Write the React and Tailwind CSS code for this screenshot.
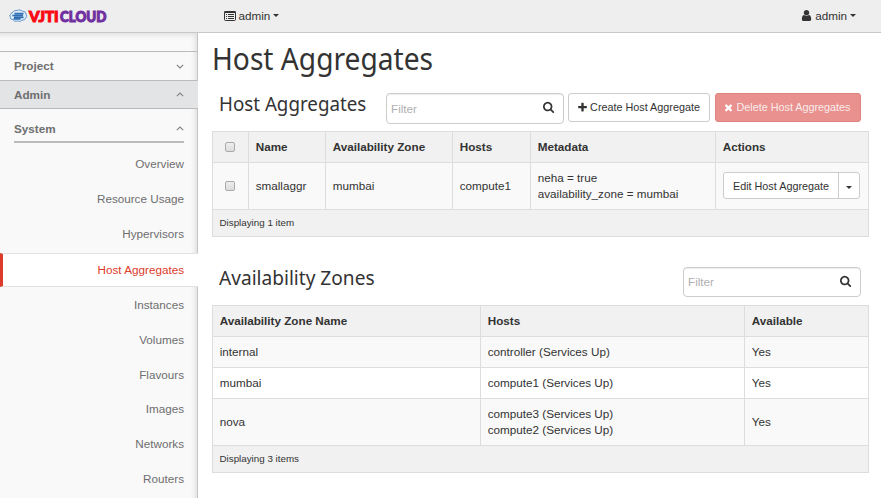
const ICONS = {
  search:
    'M1152 832q0-185-131.5-316.5t-316.5-131.5-316.5 131.5-131.5 316.5 131.5 316.5 316.5 131.5 316.5-131.5 131.5-316.5zm512 832q0 52-38 90t-90 38q-54 0-90-38l-343-342q-179 124-399 124-143 0-273.5-55.5t-225-150-150-225-55.5-273.5 55.5-273.5 150-225 225-150 273.5-55.5 273.5 55.5 225 150 150 225 55.5 273.5q0 220-124 399l343 343q37 37 37 90z',
  plus: 'M1600 736v192q0 40-28 68t-68 28h-416v416q0 40-28 68t-68 28h-192q-40 0-68-28t-28-68v-416h-416q-40 0-68-28t-28-68v-192q0-40 28-68t68-28h416v-416q0-40 28-68t68-28h192q40 0 68 28t28 68v416h416q40 0 68 28t28 68z',
  times:
    'M1490 1322q0 40-28 68l-136 136q-28 28-68 28t-68-28l-294-294-294 294q-28 28-68 28t-68-28l-136-136q-28-28-28-68t28-68l294-294-294-294q-28-28-28-68t28-68l136-136q28-28 68-28t68 28l294 294 294-294q28-28 68-28t68 28l136 136q28 28 28 68t-28 68l-294 294 294 294q28 28 28 68z',
  user: 'M1536 1399q0 109-62.5 187t-150.5 78h-854q-88 0-150.5-78t-62.5-187q0-85 8.5-160.5t31.5-152 58.5-131 94-89 134.5-34.5q131 128 313 128t313-128q76 0 134.5 34.5t94 89 58.5 131 31.5 152 8.5 160.5zm-256-887q0 159-112.5 271.5t-271.5 112.5-271.5-112.5-112.5-271.5 112.5-271.5 271.5-112.5 271.5 112.5 112.5 271.5z',
}

function Icon({ name, className }) {
  return (
    <svg viewBox="0 0 1792 1792" fill="currentColor" className={`shrink-0 ${className}`}>
      <path d={ICONS[name]} />
    </svg>
  )
}

function ListIcon() {
  return (
    <svg viewBox="0 0 12 10" className="h-[10px] w-[12px] shrink-0" fill="none">
      <rect x="0.5" y="0.5" width="11" height="9" rx="1" stroke="#333" />
      <path d="M0.5 1h11" stroke="#333" strokeWidth="2" />
      <path d="M2 3.5h1M4 3.5h6M2 5.5h1M4 5.5h6M2 7.5h1M4 7.5h6" stroke="#333" />
    </svg>
  )
}

function Caret() {
  return (
    <svg viewBox="0 0 6 3" className="h-[3px] w-[6px] shrink-0" fill="#333">
      <path d="M0 0h6L3 3z" />
    </svg>
  )
}

function Chevron({ up }) {
  return (
    <svg viewBox="0 0 8 5" className="h-[5px] w-[8px] shrink-0" fill="none" stroke="#808080" strokeWidth="1.1">
      <path d={up ? 'M0.8 4.2L4 1l3.2 3.2' : 'M0.8 0.8L4 4l3.2-3.2'} />
    </svg>
  )
}

function Logo() {
  return (
    <div className="flex items-center">
      <svg viewBox="0 0 19 14" className="h-[14px] w-[19px]" fill="none" stroke="#5a8fc6">
        <path
          d="M4 3.2Q5 1 8 1.4Q11 0 13.5 2.2Q17 2.2 17 5Q18.8 7.5 16.6 9.2Q16 11.5 12.8 11.3Q11 13.4 8.6 12Q5 13 4 10.7Q1 10.5 1.2 8.2Q0 5.5 2 5Q2 3.6 4 3.2z"
          fill="#dcebf7"
          strokeWidth="0.9"
        />
        <path d="M5.5 4.6h9M3.4 6.5h10.6M5 8.4h9.5M4.5 10h7" stroke="#2f6fb2" strokeWidth="1.6" />
      </svg>
      <span className="ml-[1px] flex w-[80px] whitespace-nowrap font-['Lato',sans-serif] text-[15px] leading-[16px] font-black [-webkit-text-stroke:1.1px_currentColor]">
        <span className="flex w-[31px]">
          <span className="origin-left scale-x-[1] text-[#fa0a14]">VJTI</span>
        </span>
        <span className="w-[48px] origin-left scale-x-[0.89] text-[#7030a0]">CLOUD</span>
      </span>
    </div>
  )
}

function Filter({ className }) {
  return (
    <div
      className={`flex w-[178px] items-center justify-between rounded-[4px] border border-[#ccc] bg-white pr-[8px] pl-[4px] shadow-[inset_0_1px_1px_rgba(0,0,0,0.075)] ${className}`}
    >
      <span className="text-[11.7px] text-[#b0b0b0]">Filter</span>
      <Icon name="search" className="mb-[3px] h-[12px] w-[12px] text-[#333]" />
    </div>
  )
}

function Cell({ children, head, first, className = '' }) {
  return (
    <div
      className={`flex flex-col justify-center border-[#ddd] leading-[16px] ${first ? '' : 'border-l'} ${head ? 'font-bold' : ''} ${className || 'px-[6.7px]'}`}
    >
      {children}
    </div>
  )
}

function Checkbox() {
  return (
    <span className="h-[10px] w-[10px] rounded-[2px] border border-[#aaa] bg-linear-to-b from-[#eee] to-[#dcdcdc]" />
  )
}

const AGG = 'grid grid-cols-[35px_77px_127px_78px_185px_153px]'
const ZONE = 'grid grid-cols-[267px_264px_124px]'
const ITEMS_ABOVE = ['Overview', 'Resource Usage', 'Hypervisors']
const ITEMS_BELOW = ['Instances', 'Volumes', 'Flavours', 'Images', 'Networks', 'Routers']
const ZONES = [
  ['internal', ['controller (Services Up)'], 'h-[31px] bg-[#f9f9f9]'],
  ['mumbai', ['compute1 (Services Up)'], 'h-[31px] bg-white'],
  ['nova', ['compute3 (Services Up)', 'compute2 (Services Up)'], 'h-[47px] bg-[#f9f9f9]'],
]

function Sidebar() {
  return (
    <aside className="w-[198px] shrink-0 border-r border-[#c4c4c4] bg-[#f9f9f9] pt-[18px] text-[#6e6e6e] shadow-[inset_-3px_3px_5px_-1px_rgba(0,0,0,0.1)]">
      <div className="flex h-[30px] items-center justify-between border-y border-[#bbb] px-[14px] pr-[13px] font-bold">
        Project
        <Chevron />
      </div>
      <div className="-mr-px flex h-[28px] items-center justify-between border-b border-[#bbb] bg-[#e3e4e6] pr-[14px] pl-[14px] font-bold">
        Admin
        <Chevron up />
      </div>
      <div className="mr-[13px] ml-[14px] flex h-[34px] items-center justify-between border-b-2 border-[#bbb] pt-[7px] font-bold">
        System
        <Chevron up />
      </div>
      <nav className="-mr-px pt-[3px] text-right">
        {ITEMS_ABOVE.map((item) => (
          <div key={item} className="h-[35px] pr-[14px] leading-[35px]">
            {item}
          </div>
        ))}
        <div className="mt-[2px] flex h-[34px] items-center justify-end border-y border-l-[3px] border-y-[#e2e2e2] border-l-[#dd3b2b] bg-white pr-[14px] text-[#dd3b2b]">
          Host Aggregates
        </div>
        {ITEMS_BELOW.map((item) => (
          <div key={item} className="h-[34.8px] pr-[14px] leading-[35px]">
            {item}
          </div>
        ))}
      </nav>
    </aside>
  )
}

export default function App() {
  return (
    <div className="flex h-[498px] w-[881px] flex-col overflow-hidden bg-white font-['Liberation_Sans',Arial,sans-serif] text-[11.7px] text-[#333]">
      <header className="flex h-[33px] shrink-0 items-center justify-between border-b border-[#c8c8c8] bg-[#eee] pr-[25px] pl-[9px]">
        <div className="flex items-center">
          <div className="w-[214.5px]">
            <Logo />
          </div>
          <div className="flex items-center gap-[3px]">
            <ListIcon />
            <span>admin</span>
            <Caret />
          </div>
        </div>
        <div className="flex items-center gap-[3px]">
          <Icon name="user" className="-mr-[1px] h-[13px] w-[13px]" />
          <span>admin</span>
          <Caret />
        </div>
      </header>
      <div className="flex min-h-0 flex-1">
        <Sidebar />
        <main className="w-[671px] pl-[14px]">
          <h1 className="h-[60px] origin-left scale-x-[0.908] pt-[5px] font-['Noto_Sans',sans-serif] text-[31px] leading-[40px] whitespace-nowrap">
            Host Aggregates
          </h1>
          <div className="flex h-[38px] items-start pr-[8px] pl-[7px]">
            <h2 className="-mt-px w-[167px] origin-left scale-x-[0.915] font-['Noto_Sans',sans-serif] text-[20.5px] leading-[22px] whitespace-nowrap">
              Host Aggregates
            </h2>
            <Filter className="h-[31px]" />
            <div className="ml-[4px] flex h-[29px] w-[142px] items-center justify-center gap-[2px] rounded-[3px] border border-[#ccc] pr-[1px] text-[10.8px] whitespace-nowrap">
              <Icon name="plus" className="h-[11px] w-[11px]" />
              Create Host Aggregate
            </div>
            <div className="ml-[5px] flex h-[29px] w-[146px] items-center justify-center gap-[2px] rounded-[3px] border border-[#e38380] bg-[#e8918e] pr-[2px] text-[10.8px] whitespace-nowrap text-[#fbecec]">
              <Icon name="times" className="h-[11px] w-[11px] text-white" />
              Delete Host Aggregates
            </div>
          </div>
          <div className="w-[657px] border border-[#ddd]">
            <div className={`h-[30px] bg-[#f1f1f1] ${AGG}`}>
              <Cell first className="items-center pr-[1px]"><Checkbox /></Cell>
              <Cell head>Name</Cell>
              <Cell head>Availability Zone</Cell>
              <Cell head>Hosts</Cell>
              <Cell head>Metadata</Cell>
              <Cell head>Actions</Cell>
            </div>
            <div className={`h-[47px] border-t border-[#ddd] bg-[#f9f9f9] ${AGG}`}>
              <Cell first className="items-center pr-[1px]"><Checkbox /></Cell>
              <Cell>smallaggr</Cell>
              <Cell>mumbai</Cell>
              <Cell>compute1</Cell>
              <Cell>
                <span>neha = true</span>
                <span className="whitespace-nowrap">availability_zone = mumbai</span>
              </Cell>
              <Cell className="px-[7px] pb-[1px]">
                <div className="flex h-[27px] w-[137px] rounded-[3px] border border-[#ccc] bg-white text-[10.8px] whitespace-nowrap">
                  <span className="flex w-[114px] items-center justify-center">Edit Host Aggregate</span>
                  <span className="flex flex-1 items-center justify-center border-l border-[#ccc] pt-[3px]">
                    <Caret />
                  </span>
                </div>
              </Cell>
            </div>
            <div className="flex h-[27px] items-center border-t border-[#ddd] bg-[#f1f1f1] pl-[6.5px] text-[9.8px]">Displaying 1 item</div>
          </div>
          <div className="mt-[30px] flex h-[38px] items-start justify-between pr-[8px] pl-[7px]">
            <h2 className="-mt-px w-[200px] origin-left scale-x-[0.932] font-['Noto_Sans',sans-serif] text-[20.5px] leading-[22px] whitespace-nowrap">
              Availability Zones
            </h2>
            <Filter className="h-[30px]" />
          </div>
          <div className="w-[657px] border border-[#ddd]">
            <div className={`h-[30px] bg-[#f1f1f1] ${ZONE}`}>
              <Cell first head>Availability Zone Name</Cell>
              <Cell head>Hosts</Cell>
              <Cell head>Available</Cell>
            </div>
            {ZONES.map(([name, hosts, tone]) => (
              <div key={name} className={`border-t border-[#ddd] ${ZONE} ${tone}`}>
                <Cell first>{name}</Cell>
                <Cell>
                  {hosts.map((host) => (
                    <span key={host}>{host}</span>
                  ))}
                </Cell>
                <Cell>Yes</Cell>
              </div>
            ))}
            <div className="flex h-[27px] items-center border-t border-[#ddd] bg-[#f1f1f1] pl-[6.5px] text-[9.8px]">Displaying 3 items</div>
          </div>
        </main>
      </div>
    </div>
  )
}
